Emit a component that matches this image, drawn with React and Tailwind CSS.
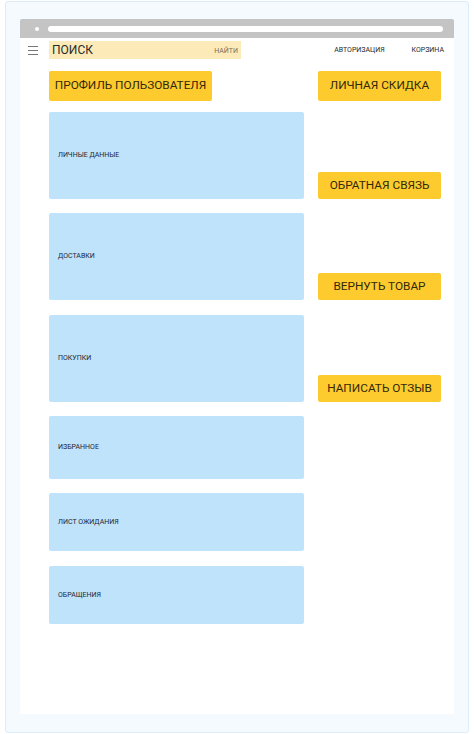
import React from 'react';

// Личный кабинет: каркас страницы профиля
const sections = [
  { title: 'ЛИЧНЫЕ ДАННЫЕ', h: 'h-[87px]', mt: 'mt-[11px]', action: 'ОБРАТНАЯ СВЯЗЬ' },
  { title: 'ДОСТАВКИ', h: 'h-[87px]', mt: 'mt-[14px]', action: 'ВЕРНУТЬ ТОВАР' },
  { title: 'ПОКУПКИ', h: 'h-[87px]', mt: 'mt-[15px]', action: 'НАПИСАТЬ ОТЗЫВ' },
  { title: 'ИЗБРАННОЕ', h: 'h-[63px]', mt: 'mt-[14px]' },
  { title: 'ЛИСТ ОЖИДАНИЯ', h: 'h-[58px]', mt: 'mt-[14px]' },
  { title: 'ОБРАЩЕНИЯ', h: 'h-[58px]', mt: 'mt-[15px]' },
];

const YellowButton = ({ children, className = '' }) => (
  <div
    className={`flex items-center justify-center whitespace-nowrap rounded-[2px] bg-[#fdcb2e] text-[11.8px] text-[#33280b] ${className}`}
  >
    {children}
  </div>
);

const App = () => {
  return (
    <div className="h-[734px] w-[474px] bg-white font-['Roboto',sans-serif]">
      <div className="ml-[5px] mt-[1px] h-[732px] w-[464px] rounded-[3px] border border-[#dcecf8] bg-[#f5fafe] px-[14px] pt-[17px]">
        {/* browser bar */}
        <div className="flex h-[19px] items-center gap-[9px] rounded-t-[2px] bg-[#c4c4c4] pl-[15px] pr-[11px]">
          <div className="h-[4px] w-[4px] rounded-full bg-white" />
          <div className="h-[6px] flex-1 rounded-full bg-white" />
        </div>

        <div className="h-[676px] bg-white">
          {/* header */}
          <div className="flex h-[24px] items-center pl-[8px] pr-[10px]">
            <div className="flex w-[10px] flex-col gap-[3px]">
              <div className="h-px bg-[#777]" />
              <div className="h-px bg-[#777]" />
              <div className="h-px bg-[#777]" />
            </div>
            <div className="ml-[11px] flex h-[18px] w-[192px] items-center justify-between bg-[#fcebb9] pl-[3px] pr-[3px]">
              <span className="text-[12px] leading-none text-[#2a2a2a]">ПОИСК</span>
              <span className="mt-[3px] text-[7px] leading-none text-[#7d7058]">НАЙТИ</span>
            </div>
            <span className="ml-auto text-[7px] text-[#1f1f1f]">АВТОРИЗАЦИЯ</span>
            <span className="ml-[27px] text-[7px] text-[#1f1f1f]">КОРЗИНА</span>
          </div>

          {/* content */}
          <div className="pl-[29px]">
            <div className="mt-[9px] flex gap-[14px]">
              <div className="w-[255px]">
                <YellowButton className="h-[30px] w-[163px]">ПРОФИЛЬ ПОЛЬЗОВАТЕЛЯ</YellowButton>
              </div>
              <YellowButton className="h-[30px] w-[123px]">ЛИЧНАЯ СКИДКА</YellowButton>
            </div>

            {sections.map((s) => (
              <div key={s.title} className={`flex items-end gap-[14px] ${s.mt}`}>
                <div
                  className={`flex w-[255px] items-center rounded-[2px] bg-[#bee3fb] pl-[9px] text-[7px] text-[#1e2533] ${s.h}`}
                >
                  {s.title}
                </div>
                {s.action && (
                  <YellowButton className="h-[27px] w-[123px]">{s.action}</YellowButton>
                )}
              </div>
            ))}
          </div>
        </div>
      </div>
    </div>
  );
};

export default App;
